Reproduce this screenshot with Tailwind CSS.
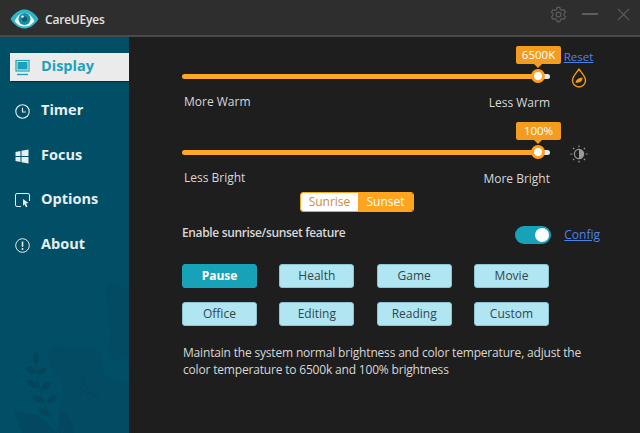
<!DOCTYPE html>
<html lang="en">
<head>
<meta charset="UTF-8">
<title>CareUEyes</title>
<script src="https://cdn.jsdelivr.net/npm/@tailwindcss/browser@4"></script>
</head>
<body class="w-[640px] h-[433px] overflow-hidden bg-[#1e1e1e] font-['Open_Sans',sans-serif]">
<div class="flex flex-col h-[433px]">
  <!-- Title bar -->
  <header class="h-[37px] shrink-0 bg-[#2e2e2e] border-b-2 border-[#4a4a4a] flex items-center pl-[10px]">
    <svg class="mt-[3px] w-[29px] h-[20px]" viewBox="0 0 29 20">
      <path d="M0.5 10C5 3 10 0.5 14.5 0.5S24 3 28.5 10C24 17 19 19.5 14.5 19.5S5 17 0.5 10Z" fill="#2fb5c8"/>
      <path d="M4.5 12C8 6 11 4 14.5 4S21 6 24.5 12C21 16.5 18 17.5 14.5 17.5S8 16.5 4.5 12Z" fill="#e8f6f8"/>
      <circle cx="14.5" cy="10" r="6" fill="#178ea3"/>
      <circle cx="14.5" cy="10" r="2.6" fill="#0c5c70"/>
      <circle cx="12.5" cy="7.6" r="1.2" fill="#fff"/>
    </svg>
    <span class="ml-[6px] mt-[4px] text-[12px] font-semibold text-[#e4e4e4] tracking-[-0.2px]">CareUEyes</span>
    <div class="ml-auto mb-[7px] flex items-center">
      <svg class="w-[17px] h-[17px]" viewBox="0 0 24 24" fill="none" stroke="#5e5e5e" stroke-width="1.6" stroke-linejoin="round">
        <path d="M10 2h4l.7 3 2.4 1.2 2.9-1 2 3.5-2.2 2v2.6l2.2 2-2 3.5-2.9-1L14.700 19 14 22h-4l-.7-3-2.400-1.200-2.900 1-2-3.500 2.200-2v-2.600l-2.200-2 2-3.500 2.900 1L9.300 5z"/>
        <circle cx="12" cy="12" r="3.400"/>
      </svg>
      <span class="ml-[15px] w-[16px] h-[2px] bg-[#5e5e5e]"></span>
      <svg class="ml-[19px] mr-[10px] w-[13px] h-[13px]" viewBox="0 0 14 14" stroke="#5e5e5e" stroke-width="1.200"><path d="M1 1l12 12M13 1L1 13"/></svg>
    </div>
  </header>

  <div class="flex flex-1 min-h-0">
    <!-- Sidebar -->
    <aside class="relative w-[129px] shrink-0 bg-[#004f66] pt-[16px] overflow-hidden">
      <svg class="absolute left-0 bottom-0 w-[129px] h-[150px]" viewBox="0 0 129 150" fill="#024b62">
        <path d="M108 2c8-3 16 2 21 8v62c-8 6-16 6-20-2-3-8 3-14 2-22-1-6-7-8-3-16 2-6-5-20 0-30Z"/>
        <path d="M50 66c6-6 18-3 24 2 8-4 20-4 26 2 4 8 0 18 8 24 6 4 14 4 21 8v48H66c-4-10-10-14-6-26 4-10 6-16 0-26-4-10-18-22-10-32Z"/>
        <g fill="#03455b">
          <ellipse cx="36" cy="75" rx="3" ry="6"/><ellipse cx="31" cy="87" rx="5" ry="3" transform="rotate(35 31 87)"/><ellipse cx="42" cy="88" rx="5" ry="3" transform="rotate(-35 42 88)"/>
          <ellipse cx="33" cy="101" rx="6" ry="3" transform="rotate(30 33 101)"/><ellipse cx="46" cy="103" rx="6" ry="3" transform="rotate(-35 46 103)"/>
          <ellipse cx="38" cy="116" rx="6" ry="3" transform="rotate(30 38 116)"/><ellipse cx="52" cy="116" rx="6" ry="3" transform="rotate(-35 52 116)"/>
          <ellipse cx="44" cy="129" rx="6" ry="3" transform="rotate(25 44 129)"/>
          <path d="M14 128l24 4 20 18H22Z" opacity=".6"/>
          <path d="M60 128c8 2 12 10 14 22H58Z" opacity=".6"/>
        </g>
        <path d="M36 78c0 24 10 50 24 72M58 72c20 24 44 48 70 72M84 92l-3 22M74 105l24 8" fill="none" stroke="#03455b" stroke-width=".8"/>
      </svg>
      <nav class="relative flex flex-col gap-[16.500px]">
        <a class="ml-[10px] h-[28px] flex items-center bg-[#ebebeb] text-[#1ba3bb] shadow-[1px_1px_1px_#00000066]">
          <svg class="ml-[5px] w-[15px] h-[17px]" viewBox="0 0 15 17" fill="none" stroke="#1ba3bb"><rect x="1" y="1.500" width="13" height="10.500" stroke-width="1.200"/><rect x="2.500" y="3" width="10" height="7.500" fill="#1ba3bb" stroke="none"/><path d="M2 15.500h11" stroke-width="1.400"/></svg>
          <span class="ml-[11px] mb-[3px] text-[14.500px] font-bold">Display</span>
        </a>
        <a class="ml-[10px] h-[28px] flex items-center text-[#e8eef0]">
          <svg class="ml-[5px] w-[15px] h-[15px]" viewBox="0 0 15 15" fill="none" stroke="#e8eef0" stroke-width="1.100"><circle cx="7.500" cy="7.500" r="6.700"/><path d="M7.500 3.800v4.200h3.300"/></svg>
          <span class="ml-[11px] mb-[3px] text-[14.500px] font-bold">Timer</span>
        </a>
        <a class="ml-[10px] h-[28px] flex items-center text-[#e8eef0]">
          <svg class="ml-[5px] w-[14px] h-[15px]" viewBox="0 0 14 15" fill="#e8eef0"><path d="M0.500 3l5-1v5h-5zM6.500 1.800L13.500 0.500v6.500h-7zM0.500 8h5v5l-5-1zM6.500 8h7v6.500l-7-1.300z"/></svg>
          <span class="ml-[12px] mb-[3px] text-[14.500px] font-bold">Focus</span>
        </a>
        <a class="ml-[10px] h-[28px] flex items-center text-[#e8eef0]">
          <svg class="ml-[5px] w-[15px] h-[15px]" viewBox="0 0 15 15" fill="none" stroke="#e8eef0" stroke-width="1"><path d="M6 13.500H2a1.500 1.500 0 0 1-1.500-1.500V2A1.500 1.500 0 0 1 2 .5h11A1.500 1.500 0 0 1 14.500 2v6"/><path d="M8 6l5.500 4-2.500.6 1.500 3-1.500.6-1.500-3-1.500 1.600z" fill="#e8eef0" stroke="none"/></svg>
          <span class="ml-[11px] mb-[3px] text-[14.500px] font-bold">Options</span>
        </a>
        <a class="ml-[10px] h-[28px] flex items-center text-[#e8eef0]">
          <svg class="ml-[5px] w-[15px] h-[15px]" viewBox="0 0 15 15" fill="none" stroke="#e8eef0" stroke-width="1"><circle cx="7.500" cy="7.500" r="6.800"/><path d="M7.500 3.500v5.300" stroke-width="1.600"/><circle cx="7.500" cy="11" r="1" fill="#e8eef0" stroke="none"/></svg>
          <span class="ml-[11px] mb-[3px] text-[14.500px] font-bold">About</span>
        </a>
      </nav>
    </aside>

    <!-- Main panel -->
    <main class="flex-1 pl-[53px] bg-[#1e1e1e]">
      <!-- Colour temperature -->
      <div class="flex">
        <div class="w-[368px]">
          <div class="relative pt-[32px]">
            <div class="absolute left-[334px] top-[9px] w-[45px] h-[18px] rounded-[2px] bg-[#f39c1f] text-white text-[11.500px] leading-[18px] text-center">6500K
              <span class="absolute left-[18px] top-[18px] w-0 h-0 border-x-[4px] border-x-transparent border-t-[4px] border-t-[#f39c1f]"></span>
            </div>
            <div class="relative h-[14px] flex items-center">
              <div class="w-[356px] h-[5px] rounded-l-full bg-[#ffa726]"></div>
              <div class="w-[12px] h-[5px] rounded-r-full bg-[#e4e9f2]"></div>
              <div class="absolute left-[349px] top-0 w-[14px] h-[14px] rounded-full bg-white border-[3px] border-[#ff9f1a]"></div>
            </div>
          </div>
          <div class="flex justify-between mt-[11px] pl-[2px] text-[12px] text-[#d8d8d8] leading-[16px]"><span>More Warm</span><span class="mt-px">Less Warm</span></div>
        </div>
        <div class="ml-[14px] pt-[12px] flex flex-col items-center w-[29px]">
          <a class="text-[11.500px] leading-[16px] text-[#4f83e6] underline">Reset</a>
          <svg class="mt-[3px] w-[16px] h-[20px]" viewBox="0 0 16 20" fill="none" stroke="#f59b12" stroke-width="1.400"><path d="M8 1.200C5.500 5 1.500 8 1.500 12.500a6.500 6.500 0 0 0 13 0C14.500 8 10.500 5 8 1.200Z"/><path d="M4.500 14.500c.5-3 3-4.500 7-5 .2 3.500-2.500 6-7 5Z" fill="#f59b12" stroke="none"/></svg>
        </div>
      </div>

      <!-- Brightness -->
      <div class="flex mt-[5px]">
        <div class="w-[368px]">
          <div class="relative pt-[29px]">
            <div class="absolute left-[334px] top-[6px] w-[45px] h-[18px] rounded-[2px] bg-[#f39c1f] text-white text-[11.500px] leading-[18px] text-center">100%
              <span class="absolute left-[18px] top-[18px] w-0 h-0 border-x-[4px] border-x-transparent border-t-[4px] border-t-[#f39c1f]"></span>
            </div>
            <div class="relative h-[14px] flex items-center">
              <div class="w-[356px] h-[5px] rounded-l-full bg-[#ffa726]"></div>
              <div class="w-[12px] h-[5px] rounded-r-full bg-[#e4e9f2]"></div>
              <div class="absolute left-[349px] top-0 w-[14px] h-[14px] rounded-full bg-white border-[3px] border-[#ff9f1a]"></div>
            </div>
          </div>
          <div class="flex justify-between mt-[11px] pl-[2px] text-[12px] text-[#d8d8d8] leading-[16px]"><span>Less Bright</span><span class="mt-px">More Bright</span></div>
        </div>
        <svg class="ml-[20px] mt-[29px] w-[18px] h-[18px]" viewBox="0 0 18 18" fill="none" stroke="#9a9a9a" stroke-width="1.200">
          <circle cx="9" cy="9" r="4.600"/><path d="M9 4.400a4.600 4.600 0 0 1 0 9.200z" fill="#9a9a9a" stroke="none"/>
          <path d="M9 .5v1.800M9 15.700v1.800M.5 9h1.800M15.700 9h1.800M3 3l1.200 1.200M13.800 13.800L15 15M3 15l1.200-1.200M13.800 4.200L15 3"/>
        </svg>
      </div>

      <!-- Sunrise / sunset switch -->
      <div class="ml-[118px] mt-[5px] flex w-[114px] h-[20px] rounded-[3px] border border-[#ffa41f] overflow-hidden text-[12px] leading-[18px] text-center">
        <span class="w-[57px] bg-white text-[#c98a3f]">Sunrise</span>
        <span class="flex-1 bg-[#ffa41f] text-white">Sunset</span>
      </div>

      <div class="flex items-center w-[418px] mt-[12px]">
        <span class="text-[12px] font-semibold tracking-[-0.35px] text-[#d8d8d8] mb-[3px]">Enable sunrise/sunset feature</span>
        <div class="ml-auto w-[36px] h-[18px] rounded-full bg-[#17a2b8] flex items-center justify-end pr-[2px]"><span class="w-[14px] h-[14px] rounded-full bg-white"></span></div>
        <a class="ml-[13px] text-[12px] text-[#4f83e6] underline">Config</a>
      </div>

      <!-- Presets -->
      <div class="grid grid-cols-[repeat(4,75px)] gap-x-[22.330px] gap-y-[14px] w-[368px] mt-[19px] text-[12px] text-[#33454c] text-center leading-[22px]">
        <div class="h-[24px] rounded-[3px] bg-[#17a2b8] border border-[#17a2b8] text-white font-bold">Pause</div>
        <div class="h-[24px] rounded-[3px] bg-[#b0e5f2] border border-[#8cc4d2]">Health</div>
        <div class="h-[24px] rounded-[3px] bg-[#b0e5f2] border border-[#8cc4d2]">Game</div>
        <div class="h-[24px] rounded-[3px] bg-[#b0e5f2] border border-[#8cc4d2]">Movie</div>
        <div class="h-[24px] rounded-[3px] bg-[#b0e5f2] border border-[#8cc4d2]">Office</div>
        <div class="h-[24px] rounded-[3px] bg-[#b0e5f2] border border-[#8cc4d2]">Editing</div>
        <div class="h-[24px] rounded-[3px] bg-[#b0e5f2] border border-[#8cc4d2]">Reading</div>
        <div class="h-[24px] rounded-[3px] bg-[#b0e5f2] border border-[#8cc4d2]">Custom</div>
      </div>

      <p class="mt-[18px] ml-px w-[410px] text-[12px] tracking-[-0.18px] leading-[17px] text-[#d8d8d8]">Maintain the system normal brightness and color temperature, adjust the color temperature to 6500k and 100% brightness</p>
    </main>
  </div>
</div>
</body>
</html>
